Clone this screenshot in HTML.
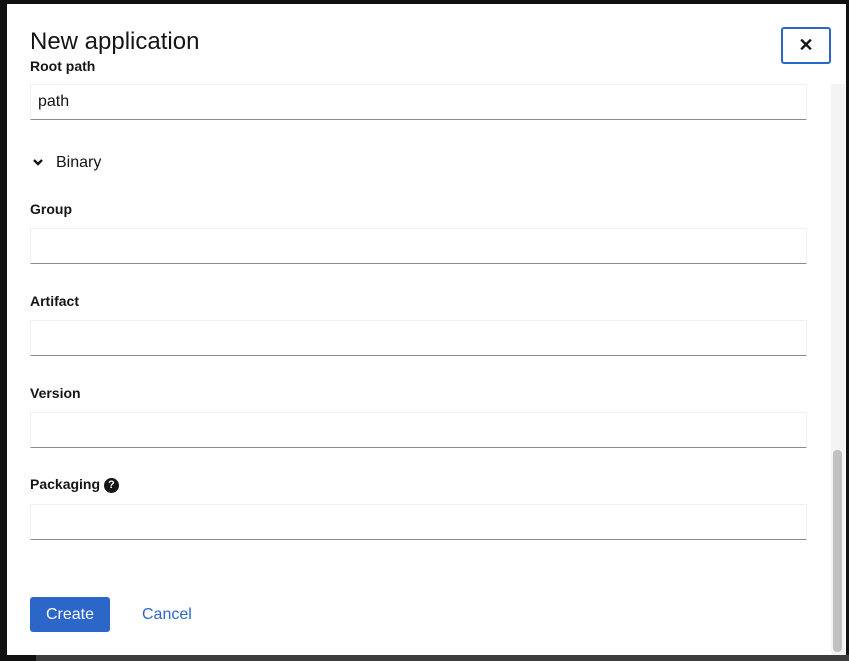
<!DOCTYPE html>
<html><head><style>
*{box-sizing:border-box;margin:0;padding:0}
body{width:849px;height:661px;background:#111;position:relative;overflow:hidden;font-family:"Liberation Sans",sans-serif;color:#151515}
.bot{position:absolute;left:36px;top:655px;width:813px;height:6px;background:#3c3c3c}
.modal{position:absolute;left:7px;top:4px;width:839px;height:651px;background:#fff}
.t{position:absolute;left:23px;top:24px;font-size:24px;color:#151515}
.x{position:absolute;left:774px;top:23px;width:50px;height:37px;border:2px solid #2b66c8;border-radius:3px;font-size:18px;font-weight:bold;text-align:center;line-height:33px}
.lbl{position:absolute;left:23px;font-size:14px;font-weight:bold}
.in{position:absolute;left:23px;width:777px;height:36px;border:1px solid #f0f0f0;border-bottom:1px solid #8a8d90;font-size:16px;padding:8px 7px}
.sb{position:absolute;left:826px;top:446px;width:9px;height:202px;background:#c1c1c1;border-radius:4px}
.sbt{position:absolute;left:824px;top:80px;width:14px;height:571px;background:#f4f4f4}
.btn{position:absolute;left:23px;top:593px;width:80px;height:35px;background:#2b66c8;color:#fff;border-radius:3px;text-align:center;line-height:35px;font-size:16px}
.cancel{position:absolute;left:135px;top:593px;line-height:35px;color:#2b66c8;font-size:16px}
</style></head><body>
<div class="bot"></div>
<div class="modal">
<div class="sbt"></div><div class="sb"></div>
<div class="t">New application</div>
<div class="x">✕</div>
<div class="lbl" style="top:54px">Root path</div>
<div class="in" style="top:80px">path</div>
<div style="position:absolute;left:25px;top:150px;font-size:16px"><svg width="12" height="10" viewBox="0 0 12 10" style="margin-right:12px"><path d="M2 3l4 4 4-4" stroke="#151515" stroke-width="2.4" fill="none"/></svg>Binary</div>
<div class="lbl" style="top:197px">Group</div>
<div class="in" style="top:224px"></div>
<div class="lbl" style="top:289px">Artifact</div>
<div class="in" style="top:316px"></div>
<div class="lbl" style="top:381px">Version</div>
<div class="in" style="top:408px"></div>
<div class="lbl" style="top:472px">Packaging <span style="display:inline-block;width:15px;height:15px;border-radius:50%;background:#151515;color:#fff;font-size:11px;text-align:center;line-height:15px;vertical-align:1px">?</span></div>
<div class="in" style="top:500px"></div>
<div class="btn">Create</div>
<div class="cancel">Cancel</div>
</div>
</body></html>
